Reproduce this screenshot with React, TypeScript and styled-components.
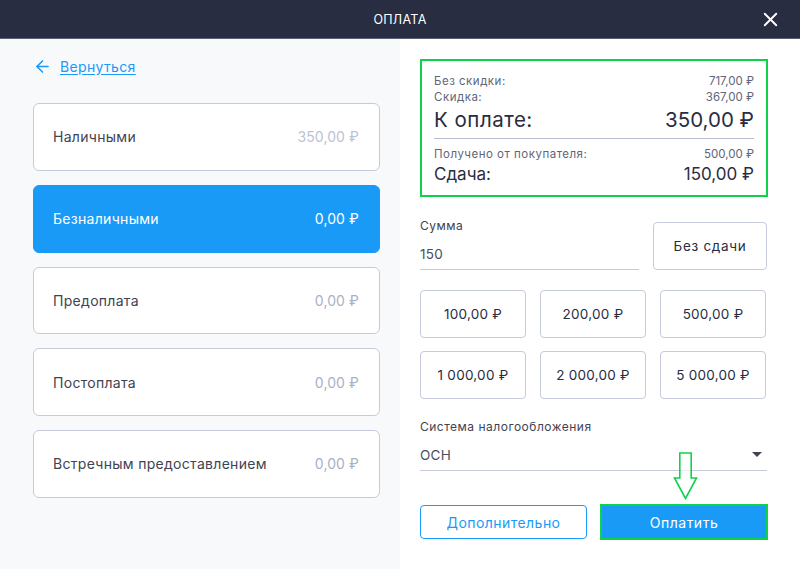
import React from 'react';
import styled, { createGlobalStyle } from 'styled-components';
import { ArrowLeft, X } from 'lucide-react';

const GlobalStyle = createGlobalStyle`
  html, body {
    margin: 0;
    padding: 0;
    background: #ffffff;
  }

  body {
    font-family: Inter, "Noto Sans", sans-serif;
    color: #282d42;
  }

  * {
    box-sizing: border-box;
  }
`;

const Screen = styled.div`
  width: 800px;
  height: 569px;
  display: flex;
  flex-direction: column;
  overflow: hidden;
`;

const Header = styled.header`
  position: relative;
  height: 39px;
  flex: none;
  display: flex;
  align-items: center;
  justify-content: center;
  background: #282d42;
  border-bottom: 1px solid #5b6072;
  color: #ffffff;
  font-size: 12.5px;
  letter-spacing: 0.3px;
`;

const CloseButton = styled.button`
  position: absolute;
  right: 18px;
  top: 7px;
  width: 24px;
  height: 24px;
  padding: 0;
  display: flex;
  align-items: center;
  justify-content: center;
  background: none;
  border: 0;
  color: #ffffff;
`;

const Body = styled.main`
  flex: 1;
  display: grid;
  grid-template-columns: 400px 400px;
  min-height: 0;
`;

const LeftPanel = styled.section`
  background: #f8f9fb;
  padding: 18px 20px 0 33px;
  display: flex;
  flex-direction: column;
`;

const BackRow = styled.div`
  display: flex;
  align-items: center;
  gap: 8px;
  height: 18px;
  margin-bottom: 28px;
  color: #1a9af7;
`;

const BackLink = styled.a`
  font-size: 14px;
  letter-spacing: 0.35px;
  color: #1a9af7;
  text-decoration: underline;
  text-underline-offset: 2px;
`;

const MethodList = styled.div`
  display: flex;
  flex-direction: column;
  gap: 14px;
`;

const MethodCard = styled.div<{ $active?: boolean }>`
  height: 67.75px;
  display: flex;
  align-items: center;
  justify-content: space-between;
  padding: 0 20px 0 19px;
  border-radius: 6px;
  border: 1px solid ${p => (p.$active ? '#1a9af7' : '#c5cbdc')};
  background: ${p => (p.$active ? '#1a9af7' : '#ffffff')};
  color: ${p => (p.$active ? '#ffffff' : '#3f4352')};
  font-size: 14px;
  letter-spacing: 0.3px;
`;

const MethodAmount = styled.span<{ $active?: boolean; $filled?: boolean }>`
  letter-spacing: 0.1px;
  color: ${p => (p.$active ? '#ffffff' : p.$filled ? '#bcc3d4' : '#a9b1c6')};
`;

const RightPanel = styled.section`
  position: relative;
  background: #ffffff;
  padding: 20px 32px 0 20px;
  display: flex;
  flex-direction: column;
`;

const Summary = styled.div`
  height: 138px;
  padding: 12px 12px 0 12px;
  border: 2px solid #0fd24a;
  color: #282d42;
`;

const SummaryRow = styled.div<{ $size: 'small' | 'large' | 'medium' }>`
  display: flex;
  justify-content: space-between;
  align-items: center;
  height: ${p => (p.$size === 'large' ? 28 : p.$size === 'medium' ? 24 : 16)}px;
  font-size: ${p => (p.$size === 'large' ? 20.5 : p.$size === 'medium' ? 17 : 11.5)}px;
  letter-spacing: ${p => (p.$size === 'large' ? 0.5 : p.$size === 'medium' ? 0 : 0.5)}px;
  color: ${p => (p.$size === 'small' ? '#5f657a' : '#282d42')};
`;

const SummaryAmount = styled.span`
  letter-spacing: 0;
`;

const SummaryDivider = styled.hr`
  margin: 5px 0 7px;
  border: 0;
  border-top: 1px solid #b9c0d2;
`;

const AmountRow = styled.div`
  margin-top: 21px;
  display: flex;
  justify-content: space-between;
  align-items: flex-start;
`;

const Field = styled.div<{ $width: number }>`
  width: ${p => p.$width}px;
`;

const FieldLabel = styled.div`
  font-size: 12px;
  line-height: 15px;
  letter-spacing: 0.5px;
  color: #3f4352;
`;

const FieldValue = styled.div`
  height: 37px;
  display: flex;
  align-items: center;
  justify-content: space-between;
  padding-top: 5px;
  border-bottom: 1px solid #c5cbdc;
  font-size: 13.5px;
  letter-spacing: 0.3px;
  color: #4a4e5d;
`;

const Caret = styled.span`
  width: 0;
  height: 0;
  margin-right: 5px;
  border-left: 5px solid transparent;
  border-right: 5px solid transparent;
  border-top: 5px solid #3f4352;
`;

const GhostButton = styled.button`
  height: 48px;
  padding: 0;
  background: #ffffff;
  border: 1px solid #c5cbdc;
  border-radius: 4px;
  color: #282d42;
  font-family: inherit;
  font-size: 13.5px;
  letter-spacing: 0.25px;
`;

const NoChangeButton = styled(GhostButton)`
  width: 114px;
  margin: 4px 1px 0 0;
  letter-spacing: 0.7px;
`;

const PresetGrid = styled.div`
  margin-top: 20px;
  display: grid;
  grid-template-columns: repeat(3, 106px);
  grid-auto-rows: 48px;
  column-gap: 14px;
  row-gap: 13px;
`;

const TaxField = styled.div`
  margin: 20px 1px 0 0;
`;

const Actions = styled.div`
  margin-top: 33px;
  display: grid;
  grid-template-columns: 167px 168px;
  column-gap: 13px;
  align-items: center;
`;

const MoreButton = styled.button`
  height: 34px;
  padding: 0;
  background: #ffffff;
  border: 1px solid #1a9af7;
  border-radius: 4px;
  color: #1a9af7;
  font-family: inherit;
  font-size: 14px;
  letter-spacing: 0.45px;
`;

const PayButton = styled.button`
  height: 36px;
  padding: 0;
  background: #1a9af7;
  border: 2px solid #0fd24a;
  color: #ffffff;
  font-family: inherit;
  font-size: 14px;
  letter-spacing: 0.5px;
`;

const HintArrow = styled.svg`
  position: absolute;
  left: 272.5px;
  top: 412.5px;
`;

const methods = [
  { name: 'Наличными', amount: '350,00 ₽', filled: true },
  { name: 'Безналичными', amount: '0,00 ₽', active: true },
  { name: 'Предоплата', amount: '0,00 ₽' },
  { name: 'Постоплата', amount: '0,00 ₽' },
  { name: 'Встречным предоставлением', amount: '0,00 ₽' },
];

const presets = ['100,00 ₽', '200,00 ₽', '500,00 ₽', '1 000,00 ₽', '2 000,00 ₽', '5 000,00 ₽'];

export default function App() {
  return (
    <Screen>
      <GlobalStyle />
      <Header>
        ОПЛАТА
        <CloseButton aria-label="Закрыть">
          <X size={23} strokeWidth={2} />
        </CloseButton>
      </Header>
      <Body>
        <LeftPanel>
          <BackRow>
            <ArrowLeft size={19} strokeWidth={2} />
            <BackLink>Вернуться</BackLink>
          </BackRow>
          <MethodList>
            {methods.map(m => (
              <MethodCard key={m.name} $active={m.active}>
                <span>{m.name}</span>
                <MethodAmount $active={m.active} $filled={m.filled}>{m.amount}</MethodAmount>
              </MethodCard>
            ))}
          </MethodList>
        </LeftPanel>
        <RightPanel>
          <Summary>
            <SummaryRow $size="small"><span>Без скидки:</span><SummaryAmount>717,00 ₽</SummaryAmount></SummaryRow>
            <SummaryRow $size="small"><span>Скидка:</span><SummaryAmount>367,00 ₽</SummaryAmount></SummaryRow>
            <SummaryRow $size="large"><span>К оплате:</span><SummaryAmount>350,00 ₽</SummaryAmount></SummaryRow>
            <SummaryDivider />
            <SummaryRow $size="small"><span>Получено от покупателя:</span><SummaryAmount>500,00 ₽</SummaryAmount></SummaryRow>
            <SummaryRow $size="medium"><span>Сдача:</span><SummaryAmount>150,00 ₽</SummaryAmount></SummaryRow>
          </Summary>
          <AmountRow>
            <Field $width={219}>
              <FieldLabel>Сумма</FieldLabel>
              <FieldValue>150</FieldValue>
            </Field>
            <NoChangeButton>Без сдачи</NoChangeButton>
          </AmountRow>
          <PresetGrid>
            {presets.map(p => <GhostButton key={p}>{p}</GhostButton>)}
          </PresetGrid>
          <TaxField>
            <FieldLabel>Система налогообложения</FieldLabel>
            <FieldValue>ОСН<Caret /></FieldValue>
          </TaxField>
          <Actions>
            <MoreButton>Дополнительно</MoreButton>
            <PayButton>Оплатить</PayButton>
          </Actions>
          <HintArrow width="25" height="48" viewBox="0 0 25 48">
            <path d="M6.8 1 H18.2 V26 H23.5 L12.5 46.5 L1.5 26 H6.8 Z" fill="#ffffff" fillOpacity="0.6" stroke="#0fd24a" strokeWidth="1.6" />
          </HintArrow>
        </RightPanel>
      </Body>
    </Screen>
  );
}
